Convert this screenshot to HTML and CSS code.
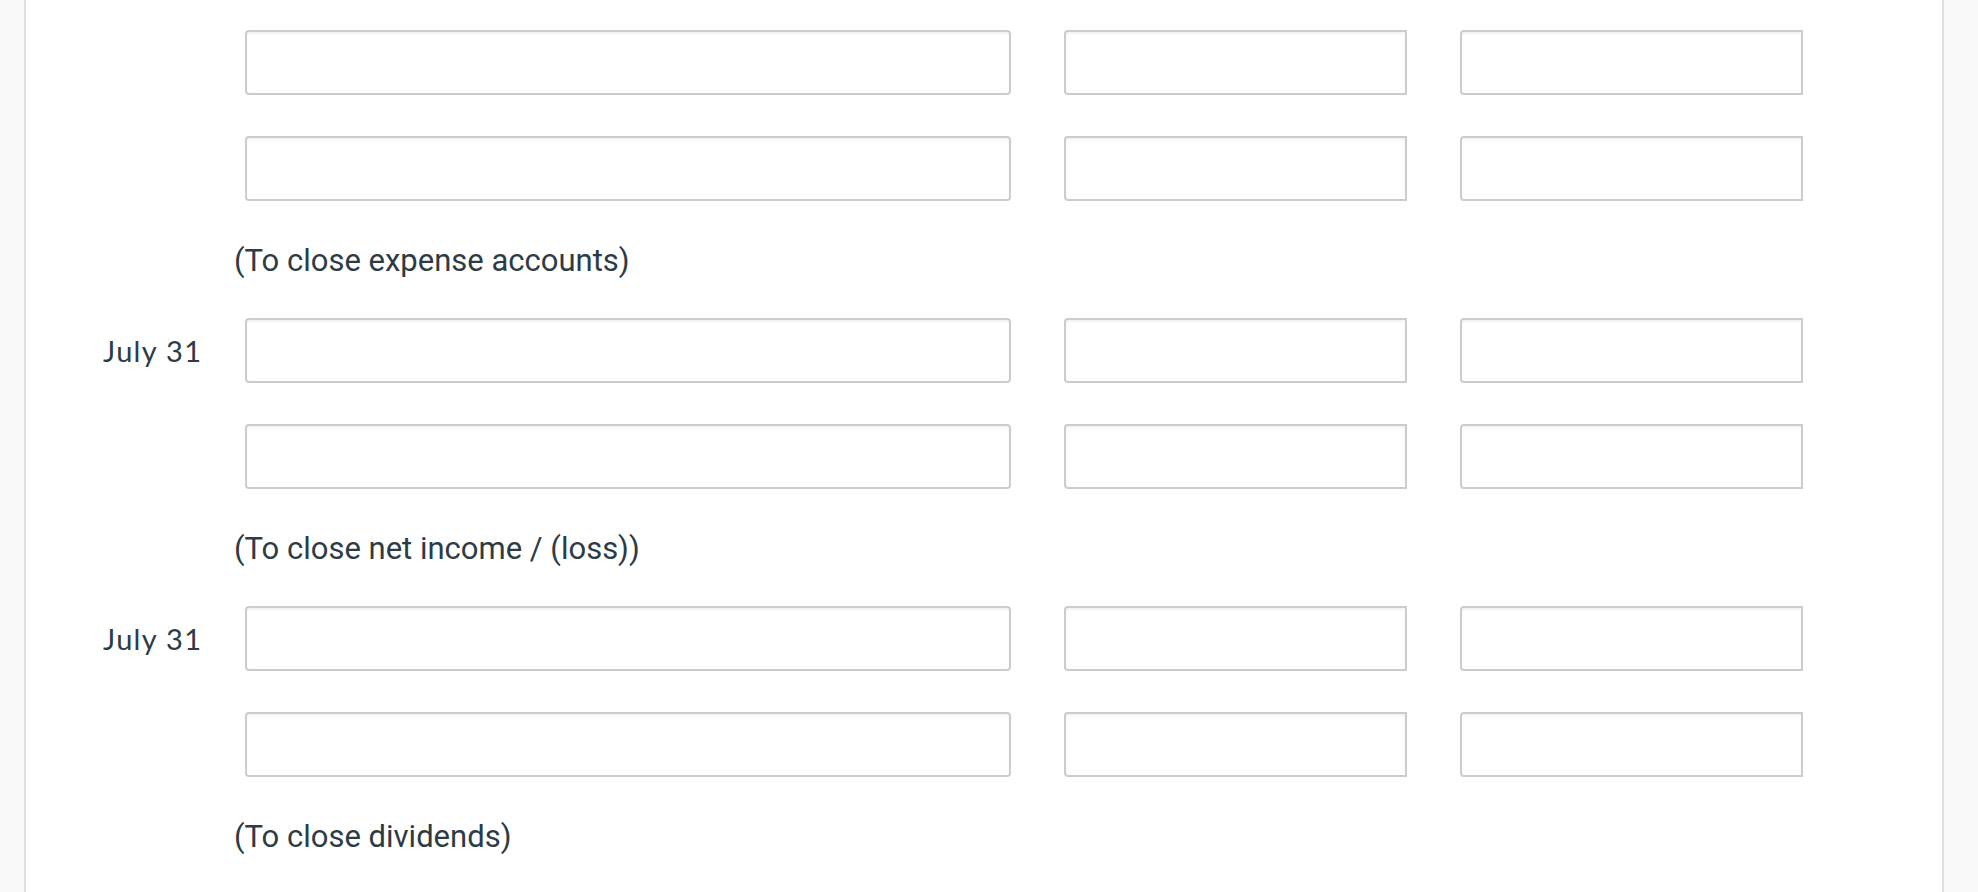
FILE: index.html
```html
<!DOCTYPE html>
<html>
<head>
<meta charset="utf-8">
<link rel="stylesheet" href="styles.css">
</head>
<body>
<div class="panel">
  <div class="entry">
    <div class="row"><div class="date"></div><div class="acct"></div><div class="amt"></div><div class="amt"></div></div>
    <div class="row"><div class="date"></div><div class="acct"></div><div class="amt"></div><div class="amt"></div></div>
    <div class="note">(To close expense accounts)</div>
  </div>
  <div class="entry">
    <div class="row"><div class="date">July 31</div><div class="acct"></div><div class="amt"></div><div class="amt"></div></div>
    <div class="row"><div class="date"></div><div class="acct"></div><div class="amt"></div><div class="amt"></div></div>
    <div class="note">(To close net income / (loss))</div>
  </div>
  <div class="entry">
    <div class="row"><div class="date">July 31</div><div class="acct"></div><div class="amt"></div><div class="amt"></div></div>
    <div class="row"><div class="date"></div><div class="acct"></div><div class="amt"></div><div class="amt"></div></div>
    <div class="note">(To close dividends)</div>
  </div>
</div>
</body>
</html>
```
FILE: styles.css
```css
html, body {
  margin: 0;
  padding: 0;
  background: #f9f9f9;
  height: 100%;
  overflow: hidden;
}
.panel {
  margin-left: 24px;
  width: 1916px;
  min-height: 100%;
  background: #ffffff;
  border-left: 2px solid #dddddd;
  border-right: 2px solid #dddddd;
  padding-top: 30px;
  font-family: Lato, "Liberation Sans", sans-serif;
  color: #2d3b45;
  display: flex;
  flex-direction: column;
  gap: 41px;
}
.entry {
  display: flex;
  flex-direction: column;
  gap: 41px;
}
.row {
  display: grid;
  grid-template-columns: 166px 766px 343px 343px;
  column-gap: 53px;
  height: 65px;
}
.date {
  padding-left: 77px;
  font-size: 29px;
  letter-spacing: 1.3px;
  line-height: 65px;
  white-space: nowrap;
}
.acct, .amt {
  box-sizing: border-box;
  height: 65px;
  border: 2px solid #cccccc;
  background: #ffffff;
  box-shadow: inset 0 2px 2px rgba(0,0,0,0.05);
}
.acct { border-radius: 4px; }
.amt { border-radius: 4px 0 0 4px; }
.note {
  margin-left: 208px;
  font-family: Roboto, "Liberation Sans", sans-serif;
  font-size: 31px;
  line-height: 35px;
  height: 35px;
  margin-top: 1px;
  margin-bottom: -1px;
}
```
